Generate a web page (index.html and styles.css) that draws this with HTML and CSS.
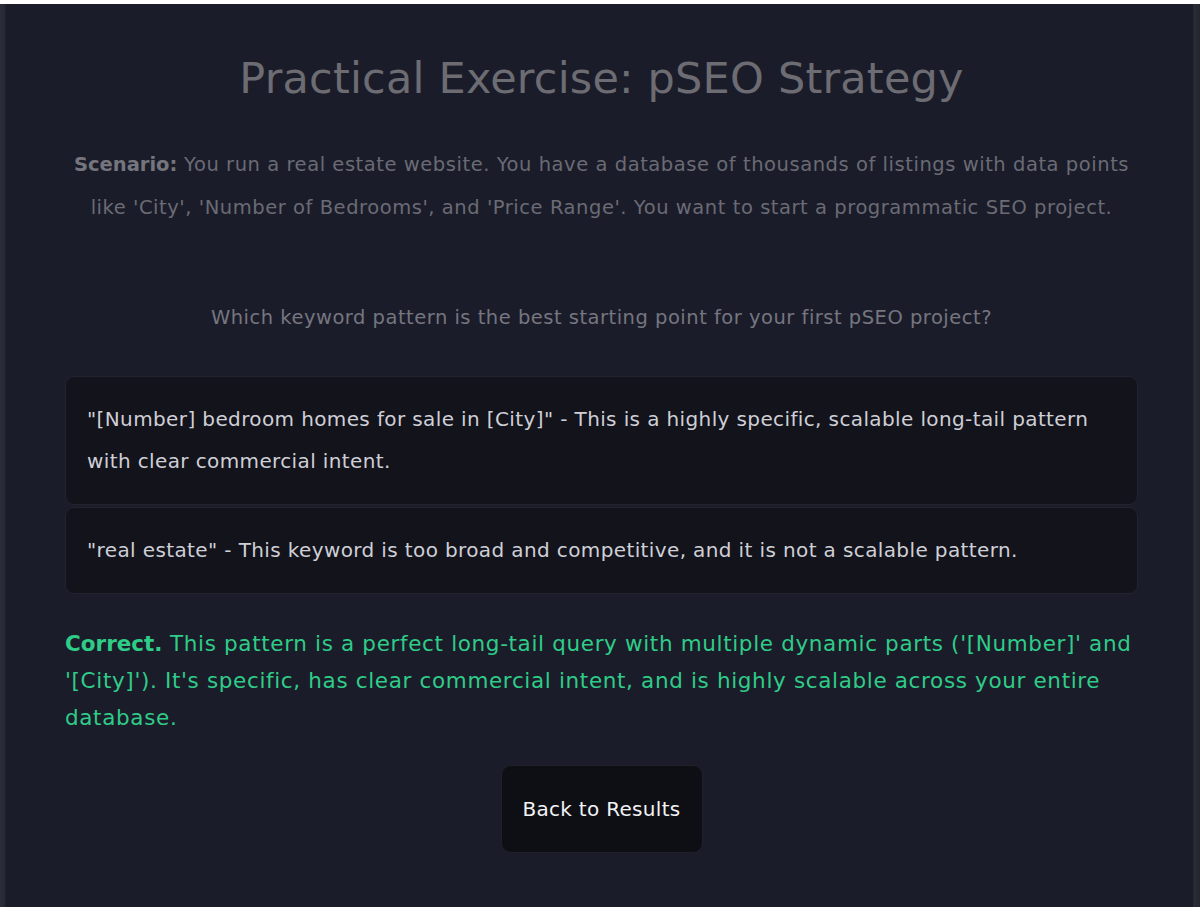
FILE: index.html
```html
<!DOCTYPE html>
<html lang="en">
<head>
<meta charset="utf-8">
<title>Practical Exercise: pSEO Strategy</title>
<link rel="stylesheet" href="styles.css">
</head>
<body>
<div class="frame">
  <main class="card">
    <h1 class="title">Practical Exercise: pSEO Strategy</h1>
    <p class="scenario"><strong>Scenario:</strong> You run a real estate website. You have a database of thousands of listings with data points like 'City', 'Number of Bedrooms', and 'Price Range'. You want to start a programmatic SEO project.</p>
    <p class="question">Which keyword pattern is the best starting point for your first pSEO project?</p>
    <div class="options">
      <div class="option">"[Number] bedroom homes for sale in [City]" - This is a highly specific, scalable long-tail pattern with clear commercial intent.</div>
      <div class="option">"real estate" - This keyword is too broad and competitive, and it is not a scalable pattern.</div>
    </div>
    <p class="feedback"><strong>Correct.</strong> This pattern is a perfect long-tail query with multiple dynamic parts ('[Number]' and '[City]'). It's specific, has clear commercial intent, and is highly scalable across your entire database.</p>
    <div class="actions">
      <button class="back-btn" type="button">Back to Results</button>
    </div>
  </main>
</div>
</body>
</html>
```

FILE: styles.css
```css
html, body {
  margin: 0;
  padding: 0;
}
body {
  background: #ffffff;
  font-family: "DejaVu Sans", "Liberation Sans", sans-serif;
  height: 907px;
  overflow: hidden;
}
.frame {
  margin-top: 4px;
  height: 903px;
  background: linear-gradient(90deg, #2b2e38 0, #262833 5px, #1b1c2a 6px, #1b1c2a 1192px, #2a2c36 1194px, #22242e 1200px);
  padding: 0 7px 0 6px;
  box-sizing: border-box;
}
.card {
  background: #1b1c2a;
  height: 100%;
  padding: 46px 55px 0 59px;
  box-sizing: border-box;
}
.title {
  margin: 0;
  text-align: center;
  font-weight: 400;
  font-size: 43px;
  line-height: 56px;
  color: #6c6c72;
  letter-spacing: 0.2px;
}
.scenario {
  margin: 37px 0 0 0;
  text-align: center;
  font-size: 19.5px;
  line-height: 43px;
  letter-spacing: 0.55px;
  color: #6a6b74;
}
.scenario strong {
  color: #75767d;
  font-weight: 700;
  letter-spacing: 0;
}
.question {
  margin: 77px 0 0 0;
  text-align: center;
  font-size: 19.5px;
  line-height: 24px;
  letter-spacing: 0.5px;
  color: #75767f;
}
.options {
  margin-top: 46px;
  display: flex;
  flex-direction: column;
  gap: 2px;
}
.option {
  background: #13131c;
  border: 1px solid #22232e;
  border-radius: 9px;
  padding: 21px 21px 22px;
  font-size: 20px;
  line-height: 42px;
  letter-spacing: 0.38px;
  color: #cfcfd6;
}
.feedback {
  margin: 31px 0 0 0;
  font-size: 21.5px;
  line-height: 37px;
  letter-spacing: 0.65px;
  color: #2fcc88;
}
.feedback strong {
  font-weight: 700;
  letter-spacing: 0;
}
.actions {
  display: flex;
  justify-content: center;
  margin-top: 29px;
}
.back-btn {
  background: #0e0f15;
  border: 1px solid #1f202a;
  border-radius: 10px;
  width: 202px;
  height: 88px;
  color: #f2f2f4;
  font-family: inherit;
  font-size: 20px;
  letter-spacing: 0.3px;
  padding: 0;
}
```
